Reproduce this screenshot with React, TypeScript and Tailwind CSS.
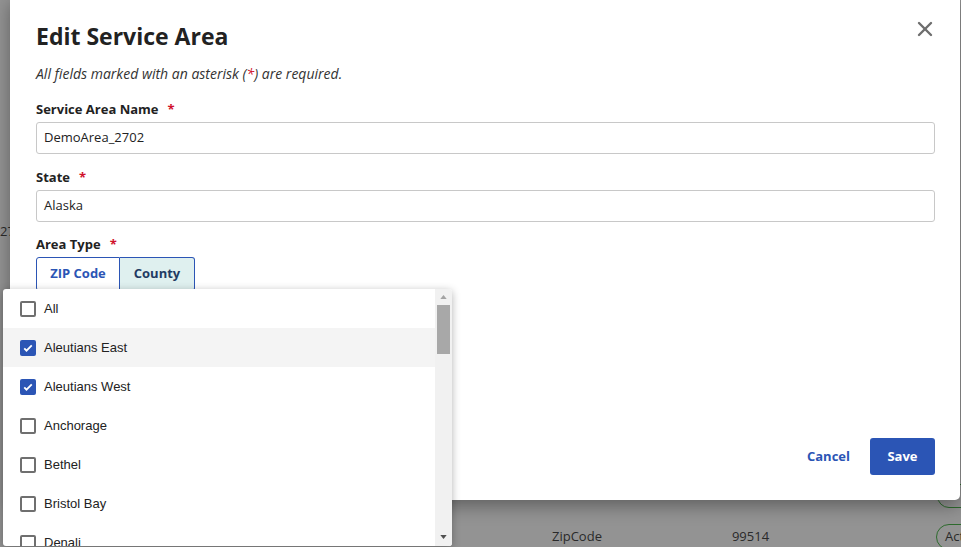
import { X } from "lucide-react";

const counties = [
  { name: "All", checked: false },
  { name: "Aleutians East", checked: true, hover: true },
  { name: "Aleutians West", checked: true },
  { name: "Anchorage", checked: false },
  { name: "Bethel", checked: false },
  { name: "Bristol Bay", checked: false },
  { name: "Denali", checked: false },
];

function Label({ text }: { text: string }) {
  return (
    <div className="flex items-center gap-[9px] text-[13px] font-bold text-[#222] leading-none">
      <span>{text}</span>
      <span className="text-[#d0112b] font-bold">*</span>
    </div>
  );
}

function Check({ checked }: { checked: boolean }) {
  if (checked) {
    return (
      <span className="grid h-[16px] w-[16px] place-items-center rounded-[2px] bg-[#2b55b5]">
        <svg viewBox="0 0 16 16" className="h-[12px] w-[12px]">
          <path d="M3 8.5l3 3 7-7" fill="none" stroke="white" strokeWidth="2.4" />
        </svg>
      </span>
    );
  }
  return <span className="h-[16px] w-[16px] rounded-[2px] border-2 border-[#6f6f6f] bg-white" />;
}

export default function App() {
  return (
    <div className="relative h-[547px] w-[961px] overflow-hidden bg-[#939393] font-['Open_Sans',sans-serif]">
      {/* background page bits */}
      <div className="absolute left-0 top-[222px] text-[13px] text-[#2a2a2a]">27</div>
      <div className="absolute left-0 right-0 top-[524px] flex items-center text-[13px] text-[#2a2a2a]">
        <span className="ml-[552px]">ZipCode</span>
        <span className="ml-[130px]">99514</span>
        <span className="ml-[167px] rounded-full border border-[#2e6b2e] px-[8px] py-[2px]">Active</span>
      </div>
      <div className="absolute left-[937px] top-[484px] h-[24px] w-[60px] rounded-full border border-[#2e6b2e]" />

      {/* modal */}
      <div className="absolute left-[10px] top-[-4px] h-[504px] w-[950px] rounded-[5px] bg-white shadow-[0_6px_18px_rgba(0,0,0,0.35)]">
        <div className="flex flex-col pl-[26px] pr-[25px] pt-[22px]">
          <div className="flex items-start justify-between">
            <h1 className="text-[23px] font-bold leading-[36px] text-[#222]">Edit Service Area</h1>
            <X className="mr-[-2px] mt-[-1px] h-[24px] w-[24px] text-[#6e6e6e]" strokeWidth={2.4} />
          </div>
          <p className="mt-[10px] text-[14px] italic text-[#333] leading-[19px]">
            All fields marked with an asterisk (<span className="text-[#d0112b]">*</span>) are required.
          </p>

          <div className="mt-[20px]">
            <Label text="Service Area Name" />
          </div>
          <div className="mt-[6px] flex h-[32px] items-center rounded-[3px] border border-[#c8c8c8] px-[7px] text-[13px] text-[#222]">
            DemoArea_2702
          </div>

          <div className="mt-[17px]">
            <Label text="State" />
          </div>
          <div className="mt-[6px] flex h-[32px] items-center rounded-[3px] border border-[#c8c8c8] px-[7px] text-[13px] text-[#222]">
            Alaska
          </div>

          <div className="mt-[16px]">
            <Label text="Area Type" />
          </div>
          <div className="mt-[6px] flex h-[34px]">
            <div className="flex w-[84px] items-center justify-center rounded-l-[3px] border border-[#2b55b5] bg-white text-[13px] font-bold text-[#2b55b5]">
              ZIP Code
            </div>
            <div className="flex w-[75px] items-center justify-center rounded-r-[3px] border border-l-0 border-[#2b55b5] bg-[#dff0ef] text-[13px] font-bold text-[#1f3b63]">
              County
            </div>
          </div>

          <div className="mt-[147px] flex items-center justify-end gap-[20px]">
            <span className="text-[13px] font-bold text-[#2b55b5]">Cancel</span>
            <span className="flex h-[37px] w-[65px] items-center justify-center rounded-[3px] bg-[#2b55b5] text-[13px] font-bold text-white">
              Save
            </span>
          </div>
        </div>
      </div>

      {/* county dropdown */}
      <div className="absolute left-[3px] top-[289px] flex h-[257px] w-[449px] overflow-hidden rounded-[3px] bg-white shadow-[0_2px_8px_rgba(0,0,0,0.3)] font-['Liberation_Sans',Arial,sans-serif]">
        <div className="flex flex-1 flex-col">
          {counties.map((c) => (
            <div
              key={c.name}
              className={`flex h-[39px] shrink-0 items-center gap-[8px] pl-[17px] text-[13px] text-[#222] ${c.hover ? "bg-[#f4f4f4]" : ""}`}
            >
              <Check checked={c.checked} />
              <span>{c.name}</span>
            </div>
          ))}
        </div>
        <div className="flex w-[17px] flex-col items-center bg-[#f1f1f1]">
          <svg viewBox="0 0 8 5" className="mt-[6px] h-[4px] w-[7px]">
            <path d="M0 5L4 0L8 5Z" fill="#a3a3a3" />
          </svg>
          <div className="mt-[6px] h-[49px] w-[13px] bg-[#a8a8a8]" />
          <div className="flex-1" />
          <svg viewBox="0 0 8 5" className="mb-[7px] h-[4px] w-[7px]">
            <path d="M0 0L4 5L8 0Z" fill="#505050" />
          </svg>
        </div>
      </div>
    </div>
  );
}
